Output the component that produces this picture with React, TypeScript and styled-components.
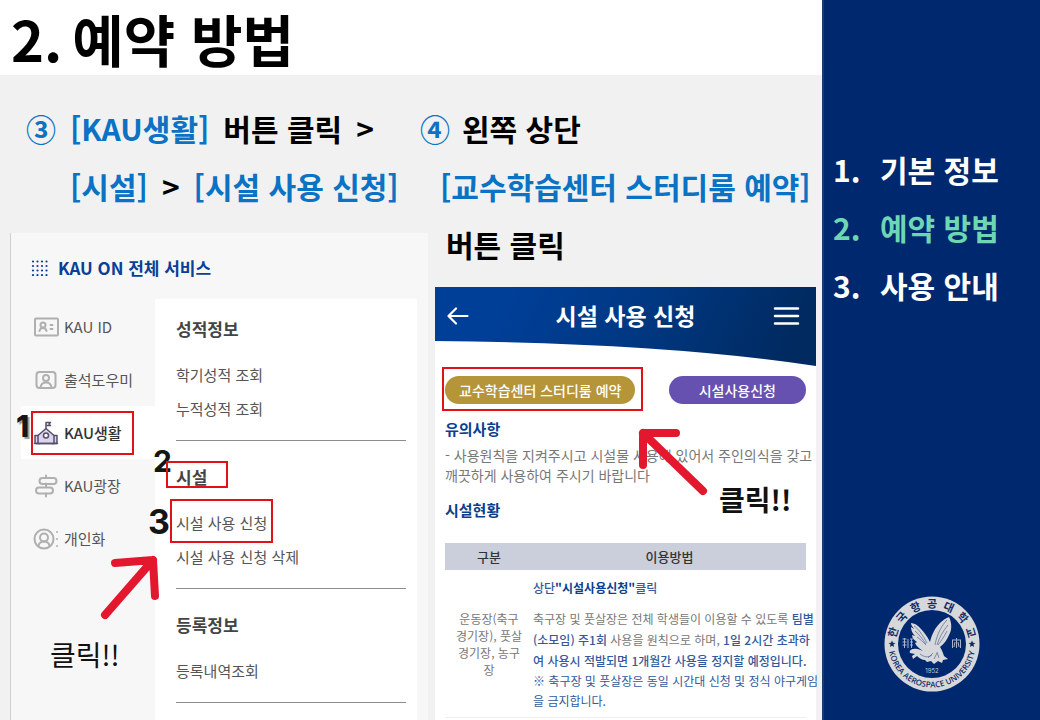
import React from "react";
import styled, { createGlobalStyle, css } from "styled-components";

const Global = createGlobalStyle`
  *, *::before, *::after { box-sizing: border-box; }
  body {
    margin: 0;
    background: #f1f1f1;
    color: #000;
    font-family: "Noto Sans CJK KR", "Noto Sans", sans-serif;
  }
  h1, h2, h3, h4, p, ul, ol { margin: 0; padding: 0; }
  ul, ol { list-style: none; }
  a { color: inherit; text-decoration: none; }
  button { font: inherit; color: inherit; border: 0; background: none; padding: 0; cursor: pointer; }
`;

const Slide = styled.div`
  display: grid;
  grid-template-columns: minmax(0, 1fr) 218px;
  min-height: 100vh;
  overflow: hidden;
`;

const Main = styled.main`
  display: flex;
  flex-direction: column;
`;

const TitleBar = styled.header`
  height: 75px;
  padding: 0 11px;
  background: #fff;
`;

const Title = styled.h1`
  display: flex;
  gap: 10px;
  font-size: 56px;
  line-height: 76px;
  font-weight: 700;
  white-space: nowrap;
`;

const Steps = styled.div`
  flex: 1;
  display: grid;
  grid-template-columns: 420px minmax(0, 1fr);
  padding-top: 24px;
`;

const Step = styled.section`
  display: flex;
  flex-direction: column;
  min-width: 0;
`;

const StepHeading = styled.h2<{ $gap: number }>`
  font-size: 30px;
  font-weight: 700;
  margin-bottom: ${(p) => p.$gap}px;
`;

const HeadingLine = styled.span<{ $indent?: number; $gap?: number }>`
  display: flex;
  gap: ${(p) => p.$gap ?? 14}px;
  padding-left: ${(p) => p.$indent ?? 0}px;
  line-height: 58px;
  white-space: nowrap;
`;

const Accent = styled.span`
  color: #0b72c4;
`;

/* Service menu card */

const ServiceCard = styled.div`
  position: relative;
  flex: 1;
  display: flex;
  flex-direction: column;
  margin: 0 -8px 0 10px;
  border-left: 1px solid #d0d0d0;
  background: #f7f7f7;
`;

const ServiceHeader = styled.h3`
  display: flex;
  align-items: center;
  gap: 10px;
  height: 66px;
  padding: 4px 0 0 20px;
  color: #0a3f96;
  font-size: 17px;
  line-height: 24px;
`;

const ServiceBody = styled.div`
  flex: 1;
  display: grid;
  grid-template-columns: 144px minmax(0, 1fr);
  padding-right: 11px;
`;

const ServiceNav = styled.nav`
  padding-top: 1px;
`;

const NavItem = styled.li<{ $active?: boolean }>`
  position: relative;
  margin-left: 10px;
  background: ${(p) => (p.$active ? "#fff" : "transparent")};
  color: ${(p) => (p.$active ? "#333" : "#555")};
  font-weight: ${(p) => (p.$active ? 500 : 400)};
`;

const NavLink = styled.a`
  display: flex;
  align-items: center;
  gap: 5px;
  height: 53px;
  padding-left: 12px;
  font-size: 15px;
  white-space: nowrap;
`;

const Panel = styled.div`
  padding: 0 11px 0 21px;
  background: #fff;
`;

const Group = styled.section`
  padding: 24px 0 14px;
  border-bottom: 1px solid #8c8c8c;
  &:first-child { padding-top: 18px; }
`;

const GroupTitle = styled.h4`
  position: relative;
  margin-bottom: 17px;
  color: #444;
  font-size: 17px;
  line-height: 24px;
`;

const GroupItem = styled.li`
  position: relative;
  color: #555;
  font-size: 15px;
  line-height: 34px;
`;

/* Annotations laid over the captures */

const Frame = styled.span<{ $x: number; $y: number; $w: number; $h: number }>`
  position: absolute;
  left: ${(p) => p.$x}px;
  top: ${(p) => p.$y}px;
  width: ${(p) => p.$w}px;
  height: ${(p) => p.$h}px;
  border: 2px solid #e01218;
  pointer-events: none;
`;

const Order = styled.span<{ $x: number; $y: number; $size: number; $shadow?: boolean }>`
  position: absolute;
  left: ${(p) => p.$x}px;
  top: ${(p) => p.$y}px;
  color: #151515;
  font-family: Inter, sans-serif;
  font-size: ${(p) => p.$size}px;
  font-weight: 700;
  line-height: 1;
  ${(p) => p.$shadow && css`font-weight: 800; text-shadow: 2px 2px 1px #999;`}
`;

const Arrow = styled.svg<{ $x: number; $y: number }>`
  position: absolute;
  left: ${(p) => p.$x}px;
  top: ${(p) => p.$y}px;
  fill: none;
  stroke: #e3172d;
  stroke-width: 8;
  stroke-linecap: round;
  stroke-linejoin: round;
  pointer-events: none;
`;

const Callout = styled.span<{ $x: number; $y: number; $bold?: boolean }>`
  position: absolute;
  left: ${(p) => p.$x}px;
  top: ${(p) => p.$y}px;
  color: #111;
  font-size: 28px;
  line-height: 40px;
  font-weight: ${(p) => (p.$bold ? 700 : 400)};
`;

/* Reservation card */

const BookingCard = styled.div`
  position: relative;
  flex: 1;
  margin: 0 6px 0 15px;
  background: #fff;
`;

const AppBar = styled.div`
  position: relative;
  height: 79px;
  margin-bottom: 10px;
`;

const Wave = styled.svg`
  position: absolute;
  inset: 0;
  width: 100%;
  height: 100%;
`;

const AppBarRow = styled.div`
  position: relative;
  display: grid;
  grid-template-columns: 27px 1fr 27px;
  align-items: center;
  height: 58px;
  padding: 0 16px 0 12px;
  color: #fff;
`;

const AppBarTitle = styled.h3`
  padding: 0 0 3px 4px;
  text-align: center;
  font-size: 23px;
  font-weight: 700;
  line-height: 32px;
`;

const IconButton = styled.button`
  display: flex;
`;

const BookingBody = styled.div`
  padding: 0 10px;
`;

const Pills = styled.div`
  display: flex;
  justify-content: space-between;
`;

const PillWrap = styled.div`
  position: relative;
`;

const Pill = styled.button<{ $bg: string; $pad: number }>`
  display: block;
  height: 28px;
  padding: 0 ${(p) => p.$pad}px;
  border-radius: 14px;
  background: ${(p) => p.$bg};
  color: #fff;
  font-size: 14px;
  font-weight: 500;
  line-height: 26px;
  white-space: nowrap;
`;

const BodyTitle = styled.h4`
  margin: 13px 0 4px;
  color: #0a3f8f;
  font-size: 15px;
  line-height: 24px;
`;

const BodyText = styled.p`
  color: #777;
  font-size: 14px;
  line-height: 20px;
  white-space: nowrap;
`;

const Table = styled.table`
  width: 100%;
  margin-top: 21px;
  border-collapse: collapse;
  table-layout: fixed;
  font-size: 12px;
  color: #777;

  th {
    height: 27px;
    padding: 0;
    background: #cbcfdb;
    color: #333;
    font-size: 13px;
    font-weight: 500;
    line-height: 26px;
  }
  th:first-child { width: 88px; }
  td {
    padding: 7px 0 6px;
    border-bottom: 1px solid #eee;
    vertical-align: middle;
    white-space: nowrap;
  }
  td:first-child { text-align: center; line-height: 17px; }
`;

const Rule = styled.p<{ $lh: number; $after?: number; $blue?: boolean }>`
  margin-bottom: ${(p) => p.$after ?? 0}px;
  line-height: ${(p) => p.$lh}px;
  ${(p) => p.$blue && css`color: #33599b;`}
  em { font-style: normal; color: #33599b; font-weight: 500; }
  strong { color: #0a3f8f; font-weight: 700; }
`;

/* Right-hand index */

const Side = styled.aside`
  display: flex;
  flex-direction: column;
  align-items: center;
  justify-content: space-between;
  padding: 140px 0 28px;
  border-left: 2px solid #1d3a6c;
  background: #00286e;
`;

const Index = styled.ol`
  align-self: stretch;
  padding-left: 9px;
`;

const IndexItem = styled.li<{ $current?: boolean }>`
  display: grid;
  grid-template-columns: 47px 1fr;
  color: ${(p) => (p.$current ? "#6fd6b4" : "#fff")};
  font-size: 30px;
  font-weight: 700;
  line-height: 58px;
  white-space: nowrap;
`;

const EmblemSvg = styled.svg`
  overflow: visible;
`;

const NavIcon = styled.svg`
  width: 26px;
  height: 26px;
  flex: none;
  fill: none;
  stroke: #b0b0b0;
  stroke-width: 2;
  stroke-linecap: round;
  stroke-linejoin: round;
`;

const IdIcon = () => (
  <NavIcon viewBox="0 0 26 26">
    <rect x="2" y="4.500" width="23" height="17" rx="1" />
    <circle cx="10" cy="11" r="2.500" />
    <path d="M6.500 17c.5-2 1.500-3 3.500-3s3 1 3.500 3M17.500 11h2M17.500 15h2" />
  </NavIcon>
);

const AttendIcon = () => (
  <NavIcon viewBox="0 0 26 26">
    <rect x="3.500" y="5" width="19" height="16" rx="3" />
    <circle cx="13" cy="11" r="3" />
    <path d="M7.500 20.500c.5-3.500 2.500-5 5.500-5s5 1.500 5.500 5" />
  </NavIcon>
);

const SchoolIcon = () => (
  <NavIcon viewBox="0 0 26 26">
    <g stroke="#564f68" strokeWidth="1.500">
      <path fill="#ded3ef" d="M2 15.500h5v8H3l-1-1zM19 15.500h5v7l-1 1h-4z" />
      <path fill="#ded3ef" d="M5 23.500v-8l8-7 8 7v8z" />
      <path d="M13 8V2.500h4.500l-1.500 1.500 1.500 1.500H13" />
      <circle cx="13" cy="15.500" r="2.500" fill="#fff" />
      <path d="M1.500 23.500h23" />
    </g>
  </NavIcon>
);

const SignIcon = () => (
  <NavIcon viewBox="0 0 26 26">
    <path d="M13 2.500v2M13 10.500v3.500M13 20.500v3" />
    <rect x="6.500" y="5" width="17" height="6" rx="3" />
    <rect x="3" y="14.500" width="17" height="6" rx="3" />
  </NavIcon>
);

const PersonIcon = () => (
  <NavIcon viewBox="0 0 26 26">
    <circle cx="11" cy="13" r="9.500" />
    <circle cx="11" cy="11.500" r="4" />
    <path d="M5.500 19.500c.8-3 2.500-4 5.500-4s4.700 1 5.500 4M24 6v.1M24 13v.1M24 20v.1" />
  </NavIcon>
);

const GridIcon = () => (
  <svg width="17" height="16" viewBox="0 0 17 16" fill="#0a3f96" aria-hidden="true">
    {[2, 6.5, 11, 15.5].map((x) =>
      [1.5, 6, 10.5, 15].map((y) => <circle key={`${x}-${y}`} cx={x} cy={y} r="1.100" />)
    )}
  </svg>
);

const Emblem = () => (
  <EmblemSvg width="96" height="96" viewBox="0 0 96 96" role="img" aria-label="한국항공대학교">
    <defs>
      <path id="arcTop" d="M11.700 52A36.500 36.500 0 1 1 84.300 52" />
      <path id="arcBottom" d="M4.500 48A43.500 43.500 0 0 0 91.500 48" />
    </defs>
    <circle cx="48" cy="48" r="47.500" fill="#d7d8dc" />
    <circle cx="48" cy="48" r="34" fill="#00286e" />
    <g fill="#0f2c66" textAnchor="middle">
      <text fontSize="11" fontWeight="700" fontFamily="'Noto Sans CJK KR', sans-serif">
        {["한", "국", "항", "공", "대", "학", "교"].map((ch, i) => (
          <textPath key={ch} href="#arcTop" startOffset={`${12 + i * 12.7}%`}>{ch}</textPath>
        ))}
      </text>
      <text fontSize="8" fontWeight="600" fontFamily="'Open Sans', sans-serif">
        <textPath href="#arcBottom" startOffset="50%">KOREA AEROSPACE UNIVERSITY</textPath>
      </text>
      <path d="M8 44.500l1 2.300 2.400.2-1.900 1.600.6 2.400L8 49.700 5.900 51l.6-2.400L4.600 47l2.400-.2zM88 44.500l1 2.300 2.400.2-1.900 1.600.6 2.400-2.100-1.300-2.100 1.300.6-2.400-1.900-1.600 2.400-.2z" />
    </g>
    <g stroke="#a9b4cc" strokeWidth="1" fill="none">
      <path d="M18.500 43h4M20.500 42v10M18.500 46h4M18.500 49h4M24 43v9M26 43h3M26 46h3M27.500 43v9M26 49h3" />
      <path d="M68 44h9M68.500 44v8M76.500 44v8M72.500 42v10M71 46l-1 5M74 46l1 5" />
    </g>
    <path
      fill="#d7d8dc"
      d="M27 27c3 0 7 2 10 6 3 3 6 7 9 13 2-8 5-14 10-19 3-3 6-5 9-6 3 6 3 13 0 18-2 5-5 9-9 12 2 3 3 6 4 9l4 3-5 1-1 3-4-2-4 3-3-3-4 1-2-2c-3 0-6-2-8-4l-4 3-1-3 3-2-5-1c-1-2 1-4 4-4 3-1 6 1 9 2-4-3-7-5-8-8l2-1c-3-2-5-4-5-7l3 1c-3-3-4-6-4-9l3 2c-2-3-3-4-3-6z"
    />
    <path
      fill="none"
      stroke="#53678f"
      strokeWidth=".7"
      d="M30 30c5 3 9 10 13 17M31 35c4 3 8 9 11 13M33 41c3 2 6 5 9 8M63 24c-5 5-10 14-12 25M64 29c-5 6-9 13-11 20M63 35c-3 6-6 10-9 14M36 58c4 3 8 4 12 1M44 62l5-5M50 63l3-6M55 62l-2-6"
    />
    <text x="48" y="77" textAnchor="middle" fontSize="6" fill="#c5cbda" fontFamily="Inter, sans-serif">1952</text>
  </EmblemSvg>
);

const index = ["기본 정보", "예약 방법", "사용 안내"];

const services = [
  { label: "KAU ID", Icon: IdIcon },
  { label: "출석도우미", Icon: AttendIcon },
  { label: "KAU생활", Icon: SchoolIcon, active: true },
  { label: "KAU광장", Icon: SignIcon },
  { label: "개인화", Icon: PersonIcon },
];

export default function App() {
  return (
    <>
      <Global />
      <Slide lang="ko">
        <Main>
          <TitleBar>
            <Title>
              <span>2.</span>
              <span>예약 방법</span>
            </Title>
          </TitleBar>
          <Steps>
            <Step>
              <StepHeading $gap={18}>
                <HeadingLine $indent={26}>
                  <Accent>③</Accent>
                  <Accent>[KAU생활]</Accent>
                  <span>버튼 클릭</span>
                  <span>&gt;</span>
                </HeadingLine>
                <HeadingLine $indent={70}>
                  <Accent>[시설]</Accent>
                  <span>&gt;</span>
                  <Accent>[시설 사용 신청]</Accent>
                </HeadingLine>
              </StepHeading>
              <ServiceCard>
                <ServiceHeader>
                  <GridIcon />
                  KAU ON 전체 서비스
                </ServiceHeader>
                <ServiceBody>
                  <ServiceNav aria-label="전체 서비스">
                    <ul>
                      {services.map(({ label, Icon, active }) => (
                        <NavItem key={label} $active={active}>
                          <NavLink href="#">
                            <Icon />
                            {label}
                          </NavLink>
                          {active && (
                            <>
                              <Frame $x={10} $y={5} $w={103} $h={44} />
                              <Order $x={-5} $y={5} $size={30} $shadow>1</Order>
                            </>
                          )}
                        </NavItem>
                      ))}
                    </ul>
                  </ServiceNav>
                  <Panel>
                    <Group>
                      <GroupTitle>성적정보</GroupTitle>
                      <ul>
                        <GroupItem><a href="#">학기성적 조회</a></GroupItem>
                        <GroupItem><a href="#">누적성적 조회</a></GroupItem>
                      </ul>
                    </Group>
                    <Group>
                      <GroupTitle>
                        시설
                        <Order $x={-23} $y={-19} $size={30}>2</Order>
                        <Frame $x={-10} $y={-4} $w={62} $h={27} />
                      </GroupTitle>
                      <ul>
                        <GroupItem>
                          <a href="#">시설 사용 신청</a>
                          <Order $x={-28} $y={-1} $size={34}>3</Order>
                          <Frame $x={-6} $y={-7} $w={103} $h={44} />
                        </GroupItem>
                        <GroupItem><a href="#">시설 사용 신청 삭제</a></GroupItem>
                      </ul>
                    </Group>
                    <Group>
                      <GroupTitle>등록정보</GroupTitle>
                      <ul>
                        <GroupItem><a href="#">등록내역조회</a></GroupItem>
                      </ul>
                    </Group>
                  </Panel>
                </ServiceBody>
                <Arrow $x={84} $y={317} width="70" height="75" viewBox="0 0 70 75" aria-hidden="true">
                  <path d="M10 65L58 10M20 13L58 10L60 46" />
                </Arrow>
                <Callout $x={39} $y={401}>클릭!!</Callout>
              </ServiceCard>
            </Step>

            <Step>
              <StepHeading $gap={14}>
                <HeadingLine $gap={12}>
                  <Accent>④</Accent>
                  <span>왼쪽 상단</span>
                </HeadingLine>
                <HeadingLine $indent={20}>
                  <Accent>[교수학습센터 스터디룸 예약]</Accent>
                </HeadingLine>
                <HeadingLine $indent={26}>버튼 클릭</HeadingLine>
              </StepHeading>
              <BookingCard>
                <AppBar>
                  <Wave viewBox="0 0 381 79" preserveAspectRatio="none" aria-hidden="true">
                    <defs>
                      <linearGradient id="bar" x1="0" y1="0" x2="1" y2="0.100">
                        <stop offset="0.200" stopColor="#003f98" />
                        <stop offset="0.600" stopColor="#003780" />
                        <stop offset="1" stopColor="#002a60" />
                      </linearGradient>
                    </defs>
                    <path fill="url(#bar)" d="M0 0H381V79Q230 56 0 54Z" />
                  </Wave>
                  <AppBarRow>
                    <IconButton aria-label="뒤로">
                      <svg width="22" height="20" viewBox="0 0 22 20" fill="none" stroke="#fff" strokeWidth="2.200" strokeLinecap="round" strokeLinejoin="round">
                        <path d="M20.500 10H1.500M9 2.500L1.500 10L9 17.500" />
                      </svg>
                    </IconButton>
                    <AppBarTitle>시설 사용 신청</AppBarTitle>
                    <IconButton aria-label="메뉴">
                      <svg width="27" height="20" viewBox="0 0 27 20" stroke="#fff" strokeWidth="2.500" strokeLinecap="round">
                        <path d="M2 2.500H25M2 10H25M2 17.500H25" />
                      </svg>
                    </IconButton>
                  </AppBarRow>
                </AppBar>
                <BookingBody>
                  <Pills>
                    <PillWrap>
                      <Pill $bg="#b5943a" $pad={14}>교수학습센터 스터디룸 예약</Pill>
                      <Frame $x={-3} $y={-9} $w={201} $h={44} />
                    </PillWrap>
                    <Pill $bg="#6650b0" $pad={30}>시설사용신청</Pill>
                  </Pills>
                  <BodyTitle>유의사항</BodyTitle>
                  <BodyText>
                    - 사용원칙을 지켜주시고 시설물 사용에 있어서 주인의식을 갖고
                    <br />
                    깨끗하게 사용하여 주시기 바랍니다
                  </BodyText>
                  <BodyTitle>시설현황</BodyTitle>
                  <Table>
                    <thead>
                      <tr>
                        <th scope="col">구분</th>
                        <th scope="col">이용방법</th>
                      </tr>
                    </thead>
                    <tbody>
                      <tr>
                        <td>
                          운동장(축구<br />경기장), 풋살<br />경기장, 농구<br />장
                        </td>
                        <td>
                          <Rule $lh={22} $after={9}>
                            <em>상단<strong>"시설사용신청"</strong>클릭</em>
                          </Rule>
                          <Rule $lh={21}>
                            축구장 및 풋살장은 전체 학생들이 이용할 수 있도록 <em>팀별</em>
                            <br />
                            <em>(소모임) 주1회</em> 사용을 원칙으로 하며, <em>1일 2시간 초과하</em>
                            <br />
                            <em>여 사용시 적발되면 1개월간 사용을 정지할 예정입니다.</em>
                          </Rule>
                          <Rule $lh={20} $blue>
                            ※ 축구장 및 풋살장은 동일 시간대 신청 및 정식 야구게임
                            <br />을 금지합니다.
                          </Rule>
                        </td>
                      </tr>
                    </tbody>
                  </Table>
                </BookingBody>
                <Arrow $x={198} $y={136} width="80" height="78" viewBox="0 0 80 78" aria-hidden="true">
                  <path d="M70 68L10 10M43 10H10V42" />
                </Arrow>
                <Callout $x={284} $y={192} $bold>클릭!!</Callout>
              </BookingCard>
            </Step>
          </Steps>
        </Main>
        <Side>
          <Index>
            {index.map((label, i) => (
              <IndexItem key={label} $current={i === 1}>
                <span>{i + 1}.</span>
                <span>{label}</span>
              </IndexItem>
            ))}
          </Index>
          <Emblem />
        </Side>
      </Slide>
    </>
  );
}
